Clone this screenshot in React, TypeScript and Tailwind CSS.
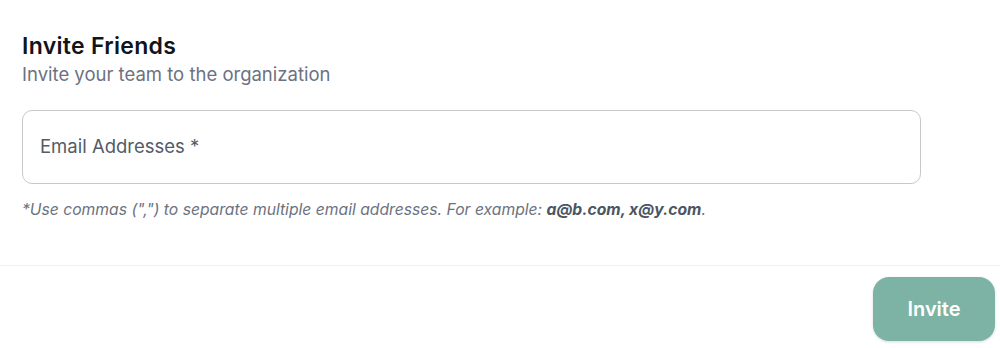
import React from "react";

export default function App() {
  return (
    <div className="w-[1000px] h-[348px] bg-white overflow-hidden flex flex-col" style={{ fontFamily: "Inter, 'Noto Sans', sans-serif" }}>
      <div className="pl-[22px] pr-[79px] pt-[32px] flex flex-col">
        <h2 className="text-[23px] leading-[29px] font-semibold text-[#111418] tracking-[0.3px]">Invite Friends</h2>
        <p className="text-[18.5px] leading-[26px] text-[#6b7280]">Invite your team to the organization</p>
        <div className="mt-[23px] h-[74px] border border-[#c9c9c9] rounded-[10px] flex items-center px-[17px]">
          <span className="text-[18.5px] text-[#545b66]">Email Addresses *</span>
        </div>
        <p className="mt-[15px] text-[15.7px] leading-[22px] italic text-[#6b7280]">
          *Use commas (",") to separate multiple email addresses. For example: <span className="font-bold text-[#4b5563]">a@b.com, x@y.com</span>.
        </p>
      </div>
      <div className="mt-[44px] border-t border-[#f0f0f0] flex justify-end pr-[5px] pt-[11px]">
        <button className="w-[122px] h-[64px] rounded-[16px] bg-[#7db3a5] text-white text-[20px] font-semibold shadow-[0_1px_3px_rgba(0,0,0,0.15)]">Invite</button>
      </div>
    </div>
  );
}
